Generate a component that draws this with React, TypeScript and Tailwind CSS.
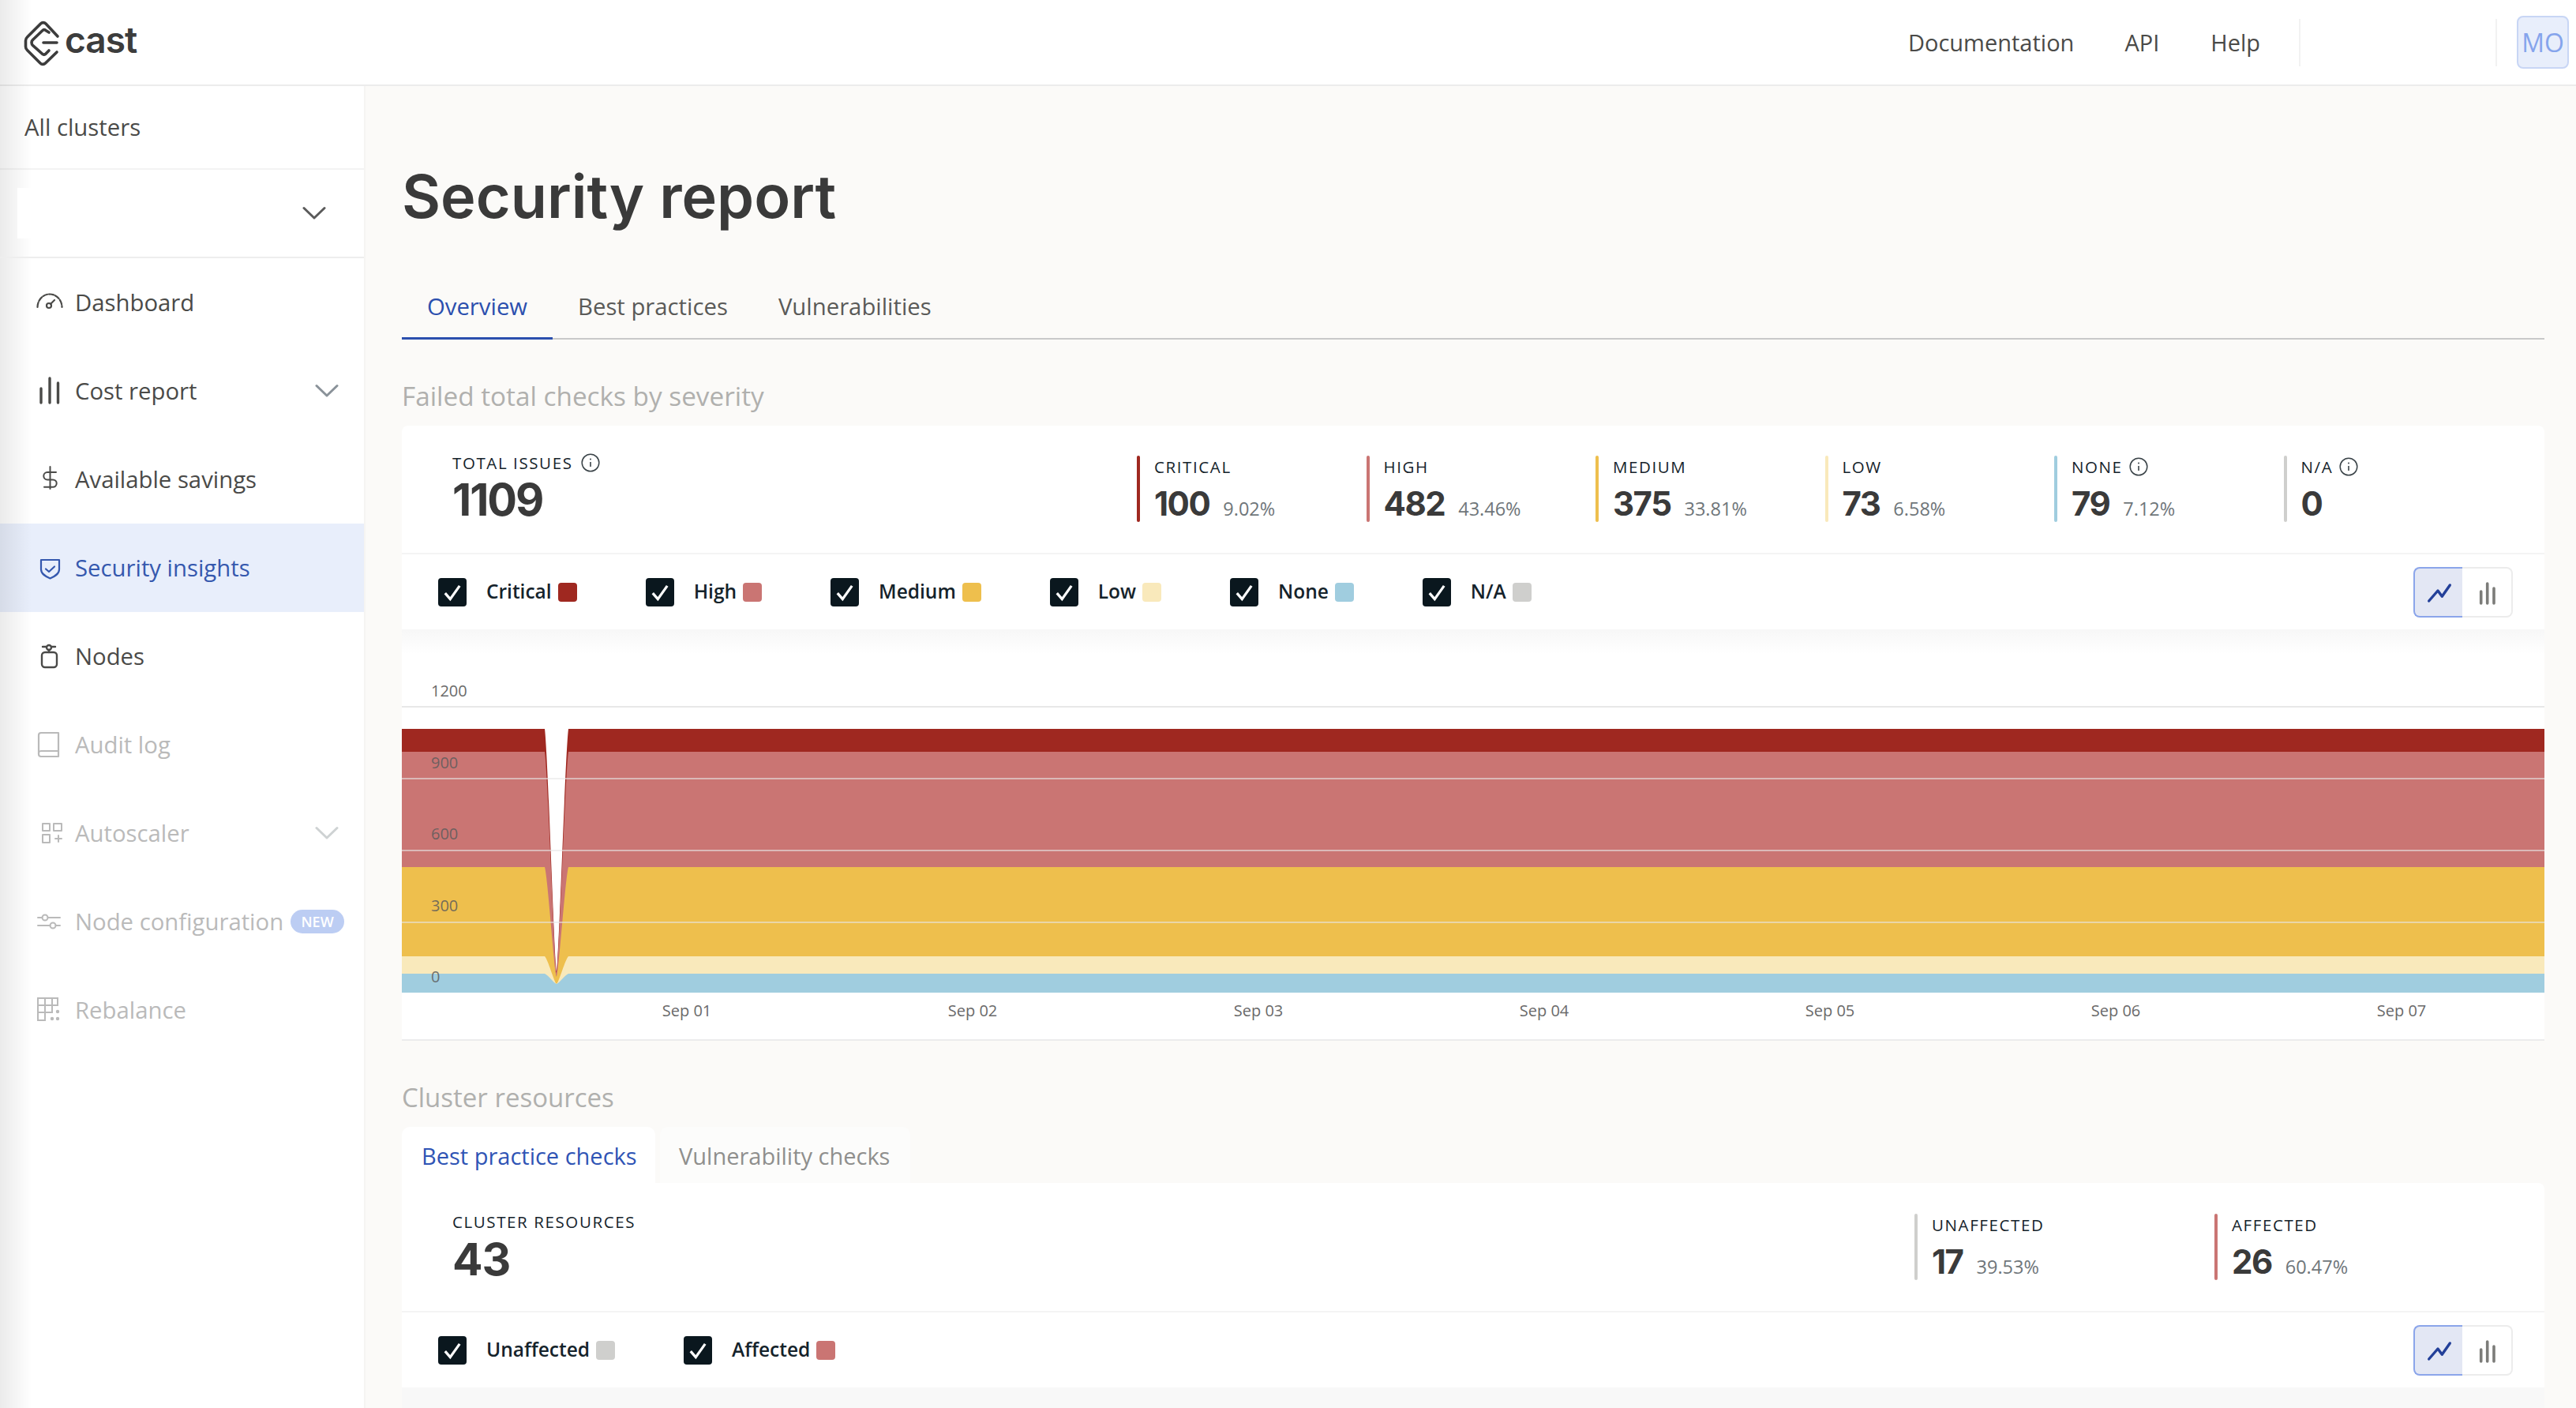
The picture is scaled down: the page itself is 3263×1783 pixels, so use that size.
import React from 'react';

const body = "font-['Open_Sans',sans-serif]";
const display = "font-['Inter',sans-serif]";

// chart geometry is in px relative to the chart block (x - 509, y - 797)
const CHART_W = 2714;
const CHART_H = 521;
const BOTTOM = 460;

const notchPath = (top: number, tip: number) => {
  const h = tip - top;
  const c1 = top + h * 0.1;
  const c2 = tip - h * 0.05;
  return `M0 ${BOTTOM} V${top} H181 C185 ${c1} 193 ${c2} 196 ${tip} C199 ${c2} 207 ${c1} 211 ${top} H${CHART_W} V${BOTTOM} Z`;
};

const bands = [
  { color: '#9f2820', top: 126, tip: 433 },
  { color: '#ca7573', top: 155, tip: 435 },
  { color: '#eebf4d', top: 301, tip: 440 },
  { color: '#f9e9bb', top: 414, tip: 449 },
  { color: '#a0cddf', top: 436, tip: 449 },
];

const gridLines = [188, 279, 370];
const yLabels = [
  { text: '900', y: 176 },
  { text: '600', y: 266 },
  { text: '300', y: 357 },
  { text: '0', y: 447 },
];
const days = ['Sep 01', 'Sep 02', 'Sep 03', 'Sep 04', 'Sep 05', 'Sep 06', 'Sep 07'];

function Chevron({ className }: { className: string }) {
  return (
    <svg width="30" height="18" viewBox="0 0 30 18" fill="none" className={className}>
      <path d="M2 2.5 15 15 28 2.5" stroke="currentColor" strokeWidth="3" strokeLinecap="round" strokeLinejoin="round" />
    </svg>
  );
}

function NavIcon({ name }: { name: string }) {
  const common = { fill: 'none', stroke: 'currentColor', strokeLinecap: 'round' as const, strokeLinejoin: 'round' as const };
  return (
    <svg width="36" height="36" viewBox="0 0 36 36" className="shrink-0">
      {name === 'dashboard' && (
        <g {...common} strokeWidth="2.2">
          <path d="M3.5 24A15.5 16.5 0 0 1 34.5 24" strokeDasharray="6 2" />
          <circle cx="18" cy="22" r="3" />
          <path d="M20 20 25 15" />
        </g>
      )}
      {name === 'cost' && (
        <g {...common} strokeWidth="3.4">
          <path d="M8 15V33M19 2V33M29.5 8V33" />
        </g>
      )}
      {name === 'savings' && (
        <g {...common} strokeWidth="2">
          <path d="M19.5 2V30M27 9H16a4.7 4.7 0 0 0 0 9.4h7a4.7 4.7 0 0 1 0 9.4H12" />
        </g>
      )}
      {name === 'security' && (
        <g {...common} strokeWidth="2.2">
          <path d="M8 8H31V20C31 26 25 29 19.5 31.5 14 29 8 26 8 20Z" />
          <path d="M14 19.5 18 23 25 16.5" />
        </g>
      )}
      {name === 'nodes' && (
        <g {...common} strokeWidth="2.4">
          <rect x="9" y="13" width="19" height="19" rx="4" />
          <circle cx="18" cy="7" r="3" />
          <path d="M10 6H15M21 6H26M18 10V13" />
        </g>
      )}
      {name === 'audit' && (
        <g {...common} strokeWidth="2.2">
          <path d="M8 3H30V33H8a3 3 0 0 1-3-3V6a3 3 0 0 1 3-3Z" />
          <path d="M5 28a3 3 0 0 1 3-2H30" />
        </g>
      )}
      {name === 'autoscaler' && (
        <g {...common} strokeWidth="2">
          <rect x="10" y="6" width="9" height="9" />
          <rect x="24" y="6" width="10" height="9" />
          <rect x="10" y="20" width="9" height="10" />
          <path d="M30 21V29M26 25H34" />
        </g>
      )}
      {name === 'config' && (
        <g {...common} strokeWidth="2">
          <path d="M4 13H9.5M16.5 13H32M4 23H19.5M26.5 23H32" />
          <circle cx="13" cy="13" r="3.5" />
          <circle cx="23" cy="23" r="3.5" />
        </g>
      )}
      {name === 'rebalance' && (
        <g fill="none" stroke="currentColor" strokeWidth="2">
          <path d="M4 3H29V12H4ZM4 12V31H13V12M4 21H22V12M13 3V21M22 3V12" />
          <circle cx="22" cy="29" r="1.2" fill="currentColor" />
          <circle cx="29" cy="29" r="1.2" fill="currentColor" />
          <circle cx="29" cy="20" r="1.2" fill="currentColor" />
        </g>
      )}
    </svg>
  );
}

const navItems = [
  { icon: 'dashboard', label: 'Dashboard' },
  { icon: 'cost', label: 'Cost report', chevron: true },
  { icon: 'savings', label: 'Available savings' },
  { icon: 'security', label: 'Security insights', active: true },
  { icon: 'nodes', label: 'Nodes' },
  { icon: 'audit', label: 'Audit log', disabled: true },
  { icon: 'autoscaler', label: 'Autoscaler', chevron: true, disabled: true },
  { icon: 'config', label: 'Node configuration', badge: true, disabled: true },
  { icon: 'rebalance', label: 'Rebalance', disabled: true },
];

function InfoIcon() {
  return (
    <svg width="24" height="24" viewBox="0 0 24 24" fill="none" className="shrink-0">
      <circle cx="12" cy="12" r="10.8" stroke="#3a4348" strokeWidth="1.5" />
      <path d="M12 11v6" stroke="#3a4348" strokeWidth="1.6" />
      <circle cx="12" cy="7.5" r="1" fill="#3a4348" />
    </svg>
  );
}

function Stat({ color, label, value, pct, info, w }: { color: string; label: string; value: string; pct?: string; info?: boolean; w: string }) {
  return (
    <div className={`flex h-[84px] ${w}`}>
      <div className="w-[4px] h-full rounded-full" style={{ backgroundColor: color }} />
      <div className="pl-[18px]">
        <div className="flex items-center gap-[8px] h-[28px] text-[20.5px] tracking-[1.6px] text-[#15232b]">
          {label}
          {info && <InfoIcon />}
        </div>
        <div className="flex items-baseline gap-[17px] mt-[13px]">
          <span className={`${display} text-[42px] leading-[40px] font-bold tracking-[-1.5px] text-[#3a3a3a]`}>{value}</span>
          {pct && <span className="text-[23.5px] text-[#6f767a]">{pct}</span>}
        </div>
      </div>
    </div>
  );
}

function Legend({ items }: { items: { label: string; color: string }[] }) {
  return (
    <div className="flex items-center gap-[87px]">
      {items.map(i => (
        <div key={i.label} className="flex items-center">
          <div className="w-[36px] h-[36px] rounded-[4px] bg-[#0a171e] flex items-center justify-center">
            <svg width="26" height="26" viewBox="0 0 24 24" fill="none">
              <path d="M3.5 13 9.500 20 20.500 4.500" stroke="#fff" strokeWidth="3" />
            </svg>
          </div>
          <span className="ml-[25px] text-[24.5px] font-semibold text-[#15232b]">{i.label}</span>
          <span className="ml-[8px] w-[24px] h-[24px] rounded-[4px]" style={{ backgroundColor: i.color }} />
        </div>
      ))}
    </div>
  );
}

function ChartToggle() {
  return (
    <div className="flex w-[126px] h-[64px]">
      <div className="w-[62px] h-full bg-[#e3e7f4] border-2 border-r-0 border-[#8ba5ea] rounded-l-[8px]">
        <svg width="60" height="60" viewBox="0 0 60 60" fill="none">
          <path d="M17.7 41 29 28 34.3 35.3 44.3 21" stroke="#234099" strokeWidth="3.4" strokeLinecap="round" strokeLinejoin="round" />
        </svg>
      </div>
      <div className="w-[64px] h-full border-2 border-l-0 border-[#ececec] rounded-r-[8px]">
        <svg width="62" height="60" viewBox="0 0 62 60" fill="none">
          <path d="M23.7 29V44M31.7 19V44M40 25V44" stroke="#7c7c79" strokeWidth="3.6" strokeLinecap="round" />
        </svg>
      </div>
    </div>
  );
}

function AreaChart() {
  return (
    <svg width={CHART_W} height={CHART_H} viewBox={`0 0 ${CHART_W} ${CHART_H}`} className={`block ${body}`}>
      <text x="37" y="85" fontSize="20" fill="#6a6a6a">1200</text>
      <rect x="0" y="97" width={CHART_W} height="2" fill="#e8e8e8" />
      {bands.map(b => (
        <path key={b.color} d={notchPath(b.top, b.tip)} fill={b.color} />
      ))}
      {gridLines.map(y => (
        <rect key={y} x="0" y={y} width={CHART_W} height="2" fill="#e6e6e6" fillOpacity="0.6" />
      ))}
      {yLabels.map(l => (
        <text key={l.text} x="37" y={l.y} fontSize="20" fill="#5c5c5c" fillOpacity="0.85">{l.text}</text>
      ))}
      {days.map((d, i) => (
        <text key={d} x={361 + i * 362} y="490" fontSize="20" fill="#6a6a6a" textAnchor="middle">{d}</text>
      ))}
      <rect x="0" y={CHART_H - 2} width={CHART_W} height="2" fill="#ececec" />
    </svg>
  );
}

export default function App() {
  return (
    <div className={`${body} relative w-[3263px] h-[1783px] overflow-hidden bg-[#fbfaf8] text-[#4a4a48]`}>
      {/* Top bar */}
      <header className="h-[109px] bg-white border-b-2 border-[#ececec] flex items-center relative">
        <div className="flex items-center ml-[24px]">
          <svg width="60" height="66" viewBox="0 0 60 66" fill="none">
            <path d="M49 25 34 9a4.500 4.500 0 0 0-6.500 0L10.500 26a6 6 0 0 0-2 4.500V38a6 6 0 0 0 2 4.500L27 59a4.500 4.500 0 0 0 6.500 0L48 45" stroke="#3c3c3c" strokeWidth="3.6" strokeLinecap="round" />
            <path d="M48 33H31M38 20 34 17.500a3 3 0 0 0-4 0L18 29a5 5 0 0 0 0 8L30 47.500a3 3 0 0 0 3.500 0L38 43" stroke="#3c3c3c" strokeWidth="3.6" strokeLinecap="round" />
          </svg>
          <span className={`${display} text-[46px] font-semibold tracking-[-1px] text-[#3c3c3c] -ml-[2px] -mt-[6px]`}>cast</span>
        </div>
        <nav className="ml-auto flex items-center text-[29px] h-full">
          <span className="mr-[64px]">Documentation</span>
          <span className="mr-[65px]">API</span>
          <span className="mr-[49px]">Help</span>
          <span className="w-[2px] h-[60px] bg-[#f2f2f2]" />
          <span className="w-[247px]" />
          <span className="w-[2px] h-[60px] bg-[#f2f2f2]" />
          <span className="ml-[25px] mr-[9px] w-[66px] h-[67px] rounded-[8px] bg-[#e8eefb] border-2 border-[#c8d6f5] flex items-center justify-center text-[32px] font-medium text-[#85a4ec]">MO</span>
        </nav>
      </header>

      <div className="flex h-[1674px]">
        {/* Sidebar */}
        <aside className="w-[463px] shrink-0 bg-white border-r-2 border-[#f5f4f2]">
          <div className="h-[106px] flex items-center pl-[31px] pt-[1px] text-[29.3px] border-b-2 border-[#f3f3f3]">All clusters</div>
          <div className="h-[112px] flex items-center justify-between pr-[48px] border-b-2 border-[#eeeeee] relative z-20">
            <div className="ml-[22px] w-[36px] h-[64px] bg-white" />
            <Chevron className="text-[#5a5a5a]" />
          </div>
          <div>
            {navItems.map(n => (
              <div
                key={n.label}
                className={`h-[112px] flex items-center pl-[44px] pr-[28px] text-[29.3px] ${
                  n.active ? 'bg-[#e8eefb] text-[#3558ae]' : n.disabled ? 'text-[#bababa]' : 'text-[#4a4a48]'
                }`}
              >
                <NavIcon name={n.icon} />
                <span className="ml-[15px] mt-[2px] whitespace-nowrap">{n.label}</span>
                {n.badge && (
                  <span className="ml-[9px] shrink-0 w-[68px] h-[30px] rounded-full bg-[#bccdf3] text-white text-[18px] font-semibold flex items-center justify-center">NEW</span>
                )}
                {n.chevron && <Chevron className={`ml-auto mr-[4px] ${n.disabled ? 'text-[#ced2d3]' : 'text-[#8a9299]'}`} />}
              </div>
            ))}
          </div>
        </aside>

        {/* Main content */}
        <main className="flex-1 pl-[46px] pr-[40px]">
          <h1 className={`${display} mt-[91px] text-[75.5px] leading-[98px] font-semibold text-[#3a3a3a]`}>Security report</h1>

          <div className="mt-[72px] flex h-[60px] border-b-2 border-[#c9c9c9] text-[29.3px]">
            <div className="h-[60px] w-[191px] pl-[32px] leading-[36px] text-[#2b4fae] border-b-[3px] border-[#2b4fae]">Overview</div>
            <div className="ml-[32px] leading-[36px] text-[#5a5a58]">Best practices</div>
            <div className="ml-[64px] leading-[36px] text-[#5a5a58]">Vulnerabilities</div>
          </div>

          <h2 className="mt-[51px] h-[40px] leading-[40px] text-[33.300px] text-[#b0b0ae]">Failed total checks by severity</h2>

          {/* Severity card */}
          <section className="mt-[18px] bg-white rounded-t-[8px]">
            <div className="h-[163px] flex pt-[38px] pl-[64px] pr-[40px] border-b-2 border-[#f4f4f4]">
              <div className="flex-1 -mt-[2px]">
                <div className="flex items-center gap-[10px] h-[22px] text-[20.5px] tracking-[1.6px] text-[#15232b]">
                  TOTAL ISSUES <InfoIcon />
                </div>
                <div className={`${display} mt-[6px] text-[56px] leading-[60px] font-bold tracking-[-2px] text-[#3a3a3a]`}>1109</div>
              </div>
              <Stat w="w-[290.5px]" color="#9f2820" label="CRITICAL" value="100" pct="9.02%" />
              <Stat w="w-[290.5px]" color="#ca7573" label="HIGH" value="482" pct="43.46%" />
              <Stat w="w-[290.5px]" color="#eebf4d" label="MEDIUM" value="375" pct="33.81%" />
              <Stat w="w-[290.5px]" color="#f9e9bb" label="LOW" value="73" pct="6.58%" />
              <Stat w="w-[290.5px]" color="#a0cddf" label="NONE" value="79" pct="7.12%" info />
              <Stat w="w-[290.5px]" color="#cfcfcd" label="N/A" value="0" info />
            </div>
            <div className="h-[95px] flex items-center justify-between pl-[46px] pr-[40px]">
              <Legend
                items={[
                  { label: 'Critical', color: '#9f2820' },
                  { label: 'High', color: '#ca7573' },
                  { label: 'Medium', color: '#eebf4d' },
                  { label: 'Low', color: '#f9e9bb' },
                  { label: 'None', color: '#a0cddf' },
                  { label: 'N/A', color: '#cfcfcd' },
                ]}
              />
              <ChartToggle />
            </div>
          </section>

          {/* Trend chart */}
          <section className="bg-gradient-to-b from-[#f7f7f7] to-white to-[6%] bg-white">
            <AreaChart />
          </section>

          <h2 className="mt-[52px] h-[40px] leading-[40px] text-[33px] text-[#b0b0ae]">Cluster resources</h2>

          <div className="mt-[17px] flex gap-[6px] text-[29px]">
            <div className="h-[71px] w-[321px] pl-[25px] pt-[18px] leading-[38px] bg-white rounded-t-[10px] text-[#2f54b5]">Best practice checks</div>
            <div className="h-[71px] w-[317px] pl-[24px] pt-[18px] leading-[38px] bg-[#fcfcfb] rounded-t-[10px] text-[#8f8f8d]">Vulnerability checks</div>
          </div>

          {/* Cluster resources card */}
          <section className="bg-white rounded-tr-[8px]">
            <div className="h-[164px] flex pt-[39px] pl-[64px] pr-[38px] border-b-2 border-[#f4f4f4]">
              <div className="flex-1 -mt-[5px]">
                <div className="h-[22px] text-[20.5px] tracking-[1.6px] text-[#15232b]">CLUSTER RESOURCES</div>
                <div className={`${display} mt-[11px] text-[57px] leading-[60px] font-bold tracking-[-1px] text-[#3a3a3a]`}>43</div>
              </div>
              <Stat w="w-[380px]" color="#cfcfcd" label="UNAFFECTED" value="17" pct="39.53%" />
              <Stat w="w-[380px]" color="#ca7573" label="AFFECTED" value="26" pct="60.47%" />
            </div>
            <div className="h-[95px] flex items-center justify-between pl-[46px] pr-[40px]">
              <Legend
                items={[
                  { label: 'Unaffected', color: '#cfcfcd' },
                  { label: 'Affected', color: '#ca7573' },
                ]}
              />
              <ChartToggle />
            </div>
          </section>
          <div className="h-[26px] bg-[#f8f8f8]" />
        </main>
      </div>

      {/* soft shadow along the window's left edge */}
      <div className="absolute left-0 top-0 w-[40px] h-full bg-gradient-to-r from-[#00000014] to-transparent pointer-events-none z-10" />
    </div>
  );
}
